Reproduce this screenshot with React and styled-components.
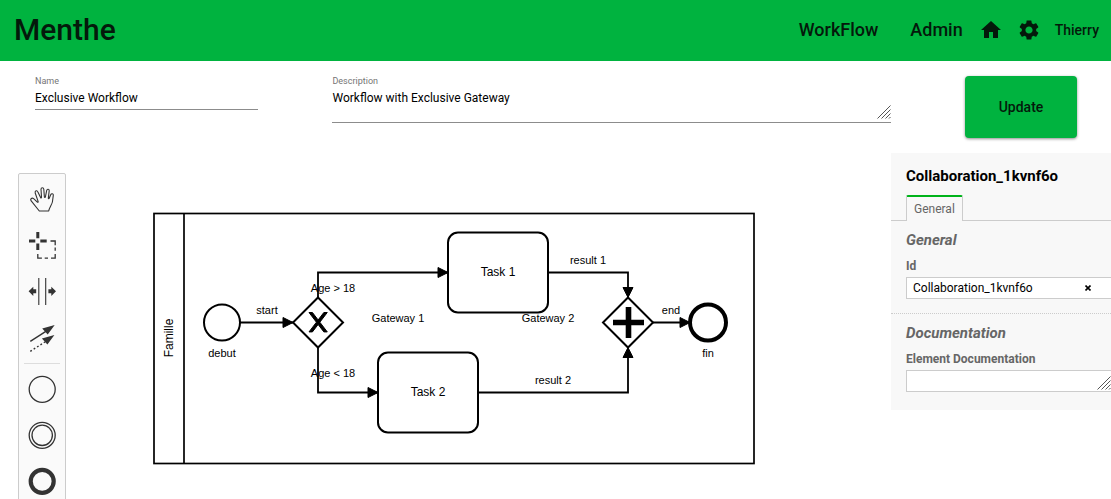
import React from "react";
import styled, { createGlobalStyle } from "styled-components";
import { MdHome, MdSettings } from "react-icons/md";

const GlobalStyle = createGlobalStyle`
  *, *::before, *::after { box-sizing: border-box; }
  html, body { margin: 0; height: 100%; }
  body {
    background: #fff;
    color: #000;
    font-family: Roboto, "Liberation Sans", sans-serif;
    overflow: hidden;
  }
  #root { height: 100%; }
  button, input, textarea { font-family: inherit; }
`;

const Page = styled.div`
  display: flex;
  flex-direction: column;
  height: 100vh;
  overflow: hidden;
`;

const Header = styled.header`
  display: flex;
  flex: none;
  align-items: center;
  justify-content: space-between;
  height: 61px;
  padding: 0 12px 2px 14px;
  background: #00b33f;
  color: #04190b;
`;

const Brand = styled.h1`
  margin: 0;
  font-size: 30px;
  font-weight: 500;
  line-height: 36px;
`;

const Nav = styled.nav`
  display: flex;
  align-items: center;
`;

const NavLink = styled.a`
  margin-left: ${(p) => p.$gap}px;
  color: inherit;
  font-size: ${(p) => (p.$small ? 14 : 18)}px;
  font-weight: 500;
  line-height: 24px;
  text-decoration: none;
`;

const IconLink = styled.a`
  display: flex;
  margin-left: ${(p) => p.$gap}px;
  color: inherit;
`;

const Form = styled.form`
  display: grid;
  flex: none;
  grid-template-columns: 2fr 5fr 112px;
  column-gap: 74px;
  align-items: start;
  height: 92px;
  padding: 14px 34px 0 35px;
`;

const Field = styled.div`
  position: relative;
  display: flex;
  flex-direction: column;
`;

const FieldLabel = styled.label`
  color: #757575;
  font-size: 9px;
  line-height: 13px;
`;

const LineInput = styled.input`
  width: 100%;
  height: 22px;
  padding: 0 0 1px;
  border: 0;
  border-bottom: 1px solid #8c8c8c;
  outline: 0;
  background: transparent;
  font-size: 12px;
  line-height: 18px;
`;

const LineArea = styled.textarea`
  display: block;
  width: 100%;
  height: 35px;
  padding: 1px 0 0;
  border: 0;
  border-bottom: 1px solid #8c8c8c;
  outline: 0;
  background: transparent;
  font-size: 12px;
  line-height: 18px;
  resize: none;
`;

const GripSvg = styled.svg`
  position: absolute;
  right: ${(p) => p.$inset}px;
  bottom: ${(p) => p.$bottom}px;
  pointer-events: none;
`;

const UpdateButton = styled.button`
  height: 62px;
  margin-top: 1px;
  padding: 0;
  border: 0;
  border-radius: 4px;
  background: #00b33f;
  box-shadow: 0 1px 3px rgba(0, 0, 0, 0.45);
  color: #04190b;
  font-size: 14px;
  font-weight: 500;
`;

const Editor = styled.main`
  display: flex;
  flex: 1;
  align-items: flex-start;
  min-height: 0;
`;

const Palette = styled.div`
  flex: none;
  width: 48px;
  margin: 20px 0 0 18px;
  padding: 2px 0;
  border: 1px solid #ccc;
  border-radius: 2px;
  background: #fafafa;
`;

const Tool = styled.button`
  display: flex;
  align-items: center;
  justify-content: center;
  width: 46px;
  height: 46px;
  padding: 0;
  border: 0;
  background: transparent;
  color: #333;
`;

const Separator = styled.hr`
  width: 36px;
  height: 1px;
  margin: 3px auto 2px;
  border: 0;
  background: #ddd;
`;

const Canvas = styled.section`
  flex: 1;
  min-width: 0;
  padding: 59px 0 0 86px;
  overflow: hidden;
`;

const DiagramSvg = styled.svg`
  display: block;
  font-family: "Liberation Sans", Arial, sans-serif;
  font-size: 11px;
  text-anchor: middle;
`;

const Panel = styled.aside`
  flex: none;
  width: 220px;
  overflow: hidden;
  background: #f8f8f8;
`;

const PanelBody = styled.div`
  width: 236px;
  padding-bottom: 18px;
`;

const PanelTitle = styled.h2`
  margin: 0;
  padding: 13px 15px 9px;
  font-size: 15px;
  font-weight: 700;
  line-height: 20px;
`;

const Tabs = styled.div`
  height: 26px;
  padding: 0 15px;
  border-bottom: 1px solid #ccc;
`;

const Tab = styled.button`
  height: 26px;
  padding: 0 7px;
  border: 1px solid #ccc;
  border-top: 2px solid #00b31a;
  border-bottom: 0;
  border-radius: 2px 2px 0 0;
  background: #f8f8f8;
  color: #666;
  font-size: 12px;
`;

const Group = styled.section`
  display: flex;
  flex-direction: column;
  padding: 9px 15px ${(p) => (p.$ruled ? 14 : 0)}px;
  border-bottom: ${(p) => (p.$ruled ? "1px dotted #ccc" : "0")};
`;

const GroupTitle = styled.h3`
  margin: 0 0 8px;
  color: #666;
  font-size: 15px;
  font-style: italic;
  font-weight: 700;
  line-height: 20px;
`;

const GroupLabel = styled.label`
  margin-bottom: 3px;
  color: #666;
  font-size: 12px;
  font-weight: 700;
  line-height: 16px;
`;

const BoxWrap = styled.div`
  position: relative;
`;

const boxStyle = `
  display: block;
  width: 100%;
  height: 22px;
  padding: 0 6px;
  border: 1px solid #ccc;
  border-radius: 0;
  outline: 0;
  background: #fff;
  font-size: 12px;
`;

const BoxInput = styled.input`
  ${boxStyle}
`;

const BoxArea = styled.textarea`
  ${boxStyle}
  resize: none;
`;

const ClearButton = styled.button`
  position: absolute;
  top: 1px;
  right: 14px;
  display: flex;
  align-items: center;
  justify-content: center;
  width: 20px;
  height: 20px;
  padding: 0;
  border: 0;
  background: transparent;
`;

function Grip({ inset = 0, bottom = 2 }) {
  return (
    <GripSvg $inset={inset} $bottom={bottom} width="14" height="14" viewBox="0 0 14 14" fill="none" stroke="#555" aria-hidden="true">
      <path d="M0.5 13.5L13.5 0.5M4.5 13.5L13.5 4.5M8.5 13.5L13.5 8.5M12 13.5L13.5 12" />
    </GripSvg>
  );
}

const tools = [
  {
    label: "Hand tool",
    art: (
      <path
        fill="none"
        stroke="currentColor"
        strokeWidth="1.1"
        strokeLinejoin="round"
        d="M12.3 27L4 16.7C3 15 4.9 13.3 6.6 14.6L10.6 18.3C11 18.4 11.3 18 11.1 17.4L8.2 9C7.7 6.6 10.1 6 10.9 7.9L13.6 13.6C14 14.2 14.5 14 14.5 13.3L14 5.2C14.1 3.3 16.6 3.3 16.8 5.2L17.4 13C17.6 13.6 18.2 13.6 18.4 13L19.7 6.4C20.2 4.6 22.4 5 22.2 6.8L21.3 14.2C21.4 14.8 21.9 14.9 22.2 14.3L23.7 10.8C24.5 9 26.6 9.6 26.3 11.4L25.4 18C24.8 20.6 22.3 23.6 21.7 27Z"
      />
    ),
  },
  {
    label: "Lasso tool",
    art: (
      <g fill="none" stroke="currentColor">
        <path strokeWidth="3" d="M2 11H8.3M13.3 11H19.7M10.8 2V8.3M10.8 13.5V20" />
        <path strokeWidth="1.3" d="M23.5 11H28.2V15.3M28.2 17.5V20.8M28.2 24V28.2H24M21 28.2H17.7M14.9 28.2H10.8V24" />
      </g>
    ),
  },
  {
    label: "Space tool",
    art: (
      <>
        <path fill="none" stroke="currentColor" strokeWidth="1.1" d="M11.8 2V29M18.7 2V29" />
        <path fill="currentColor" d="M1.6 15.3L6.3 10.7V13.3H9.2V17.2H6.3V20ZM29 15.3L24.3 10.7V13.3H21.4V17.2H24.3V20Z" />
      </>
    ),
  },
  {
    label: "Global connect tool",
    art: (
      <>
        <path fill="none" stroke="currentColor" strokeWidth="1.4" d="M3.3 19.3L20 8.7" />
        <path fill="none" stroke="currentColor" strokeWidth="1.4" strokeDasharray="1.8 2.2" d="M3.3 29.3L20 18.7" />
        <path fill="currentColor" d="M27.7 3L15.2 6.5L20.7 12.5ZM27.4 13L14.9 16.5L20.4 22.5Z" />
      </>
    ),
  },
  null,
  {
    label: "Create start event",
    art: <circle cx="15.2" cy="15.3" r="13" fill="none" stroke="currentColor" strokeWidth="1.3" />,
  },
  {
    label: "Create intermediate event",
    art: (
      <g fill="none" stroke="currentColor" strokeWidth="1.3">
        <circle cx="15.2" cy="15.3" r="13" />
        <circle cx="15.2" cy="15.3" r="10.2" />
      </g>
    ),
  },
  {
    label: "Create end event",
    art: <circle cx="15.2" cy="15.3" r="11.5" fill="none" stroke="currentColor" strokeWidth="4.2" />,
  },
];

const flows = [
  "M240 322.5H293",
  "M318 297.5V272.5H448",
  "M318 347.5V392.5H378",
  "M548 272.5H628V297.5",
  "M478 392.5H628V347.5",
  "M653 322.5H690",
];

const labels = [
  [267, 314, "start"],
  [222, 357, "debut"],
  [333, 292, "Age > 18"],
  [333, 377, "Age < 18"],
  [398, 322, "Gateway 1"],
  [548, 322, "Gateway 2"],
  [588, 264, "result 1"],
  [553, 384, "result 2"],
  [671, 314, "end"],
  [708, 357, "fin"],
];

function Diagram() {
  return (
    <DiagramSvg width="604" height="254" viewBox="152 212 604 254" role="img" aria-label="Exclusive Workflow diagram">
      <defs>
        <marker
          id="flow-end"
          viewBox="0 0 20 20"
          refX="11"
          refY="10"
          markerUnits="userSpaceOnUse"
          markerWidth="20"
          markerHeight="20"
          orient="auto"
        >
          <path d="M1 5L11 10L1 15Z" fill="#000" stroke="#000" strokeWidth="1" />
        </marker>
      </defs>
      <g fill="#fff" stroke="#000" strokeWidth="2">
        <rect x="154" y="213.5" width="600" height="250" strokeWidth="1.7" />
        <path d="M184 213.5V463.5" strokeWidth="1.7" />
        {flows.map((d) => (
          <path key={d} d={d} fill="none" strokeWidth="1.8" markerEnd="url(#flow-end)" />
        ))}
        <circle cx="222" cy="322.5" r="18" />
        <path d="M318 297.5L343 322.5L318 347.5L293 322.5Z" />
        <path
          fill="#000"
          strokeWidth="1"
          d="M309 312.5l7.43 9.71l-7.43 9.71h3.43l5.71-7.46l5.71 7.46h3.43l-7.43-9.71l7.43-9.71h-3.43l-5.71 7.46l-5.71-7.46z"
        />
        <rect x="448" y="232.5" width="100" height="80" rx="10" />
        <rect x="378" y="352.5" width="100" height="80" rx="10" />
        <path d="M628 297.5L653 322.5L628 347.5L603 322.5Z" />
        <path d="M613 322.5H644M628.5 307V338" strokeWidth="5.6" />
        <circle cx="708" cy="322.5" r="18" strokeWidth="4" />
      </g>
      {labels.map(([x, y, text]) => (
        <text key={text} x={x} y={y}>{text}</text>
      ))}
      <g fontSize="12">
        <text x="498" y="276">Task 1</text>
        <text x="428" y="396">Task 2</text>
        <text transform="translate(173 338) rotate(-90)">Famille</text>
      </g>
    </DiagramSvg>
  );
}

export default function App() {
  return (
    <Page>
      <GlobalStyle />
      <Header>
        <Brand>Menthe</Brand>
        <Nav>
          <NavLink href="#workflow" $gap={0}>WorkFlow</NavLink>
          <NavLink href="#admin" $gap={32}>Admin</NavLink>
          <IconLink href="#home" aria-label="Home" $gap={16}><MdHome size={24} /></IconLink>
          <IconLink href="#settings" aria-label="Settings" $gap={14}><MdSettings size={24} /></IconLink>
          <NavLink href="#profile" $gap={14} $small>Thierry</NavLink>
        </Nav>
      </Header>

      <Form onSubmit={(e) => e.preventDefault()}>
        <Field>
          <FieldLabel htmlFor="wf-name">Name</FieldLabel>
          <LineInput id="wf-name" defaultValue="Exclusive Workflow" />
        </Field>
        <Field>
          <FieldLabel htmlFor="wf-description">Description</FieldLabel>
          <LineArea id="wf-description" defaultValue="Workflow with Exclusive Gateway" />
          <Grip bottom={4} />
        </Field>
        <UpdateButton type="submit">Update</UpdateButton>
      </Form>

      <Editor>
        <Palette>
          {tools.map((tool) =>
            tool ? (
              <Tool key={tool.label} type="button" aria-label={tool.label}>
                <svg width="30" height="30" viewBox="0 0 30 30" aria-hidden="true">{tool.art}</svg>
              </Tool>
            ) : (
              <Separator key="separator" />
            )
          )}
        </Palette>
        <Canvas>
          <Diagram />
        </Canvas>
        <Panel>
          <PanelBody>
            <PanelTitle>Collaboration_1kvnf6o</PanelTitle>
            <Tabs>
              <Tab type="button">General</Tab>
            </Tabs>
            <Group $ruled>
              <GroupTitle>General</GroupTitle>
              <GroupLabel htmlFor="element-id">Id</GroupLabel>
              <BoxWrap>
                <BoxInput id="element-id" defaultValue="Collaboration_1kvnf6o" />
                <ClearButton type="button" aria-label="Clear id">
                  <svg width="6" height="6" viewBox="0 0 6 6" stroke="#000" strokeWidth="1.6" aria-hidden="true">
                    <path d="M0.5 0.5L5.5 5.5M5.5 0.5L0.5 5.5" />
                  </svg>
                </ClearButton>
              </BoxWrap>
            </Group>
            <Group>
              <GroupTitle>Documentation</GroupTitle>
              <GroupLabel htmlFor="element-doc">Element Documentation</GroupLabel>
              <BoxWrap>
                <BoxArea id="element-doc" />
                <Grip inset={1} bottom={2} />
              </BoxWrap>
            </Group>
          </PanelBody>
        </Panel>
      </Editor>
    </Page>
  );
}
